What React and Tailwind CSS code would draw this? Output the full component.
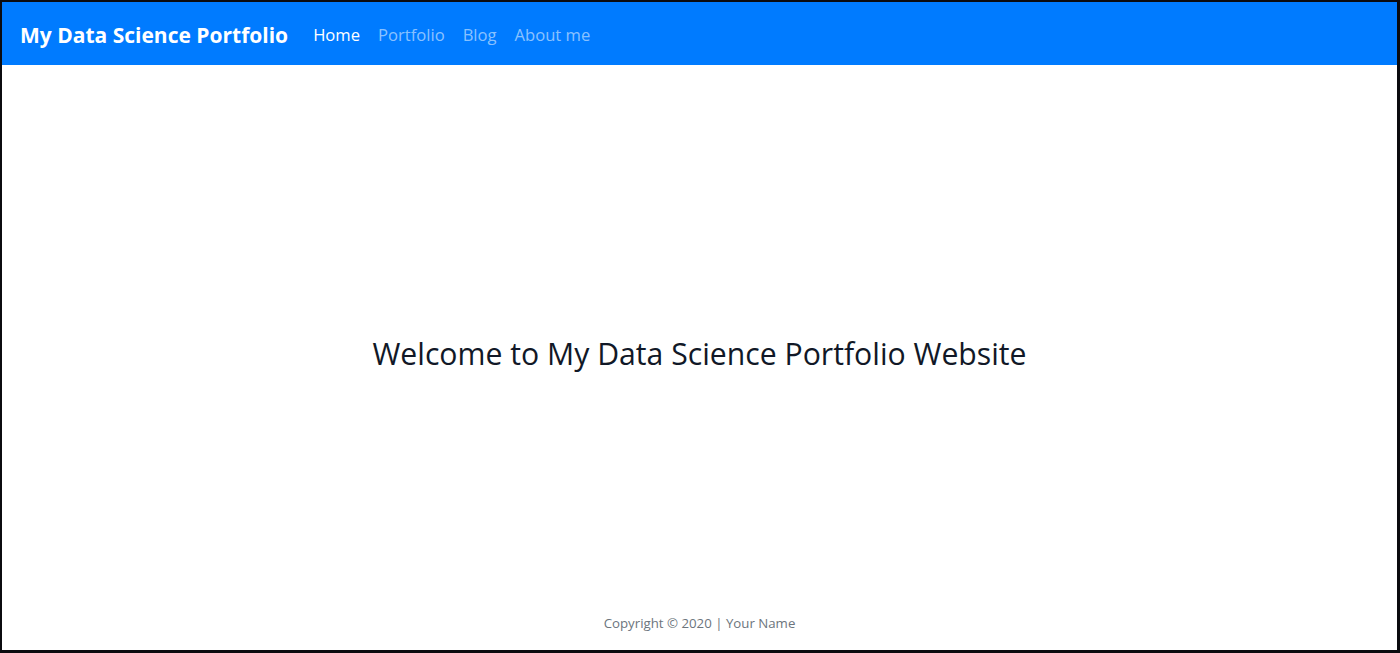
const App = () => {
  return (
    <div className="w-screen h-[653px] flex flex-col bg-white border-2 border-b-[3px] border-r-[3px] border-[#0b0b0f] font-['Open_Sans',sans-serif]">

      <nav className="h-[63px] bg-[#007bff] flex items-center px-[18px] pt-[4px]">
        <a className="text-[21px] font-bold text-white mr-[25px]">My Data Science Portfolio</a>
        <ul className="flex items-center gap-[18px] text-[16.6px]">
          <li className="text-white">Home</li>
          <li className="text-[#ffffff8c]">Portfolio</li>
          <li className="text-[#ffffff8c]">Blog</li>
          <li className="text-[#ffffff8c]">About me</li>
        </ul>
      </nav>

      <main className="flex-1 flex items-center justify-center">
        <h1 className="text-[30.2px] text-[#111827] mt-[44px]">Welcome to My Data Science Portfolio Website</h1>
      </main>

      <footer className="h-[52px] flex justify-center pt-[16px]">
        <p className="text-[13.25px] text-[#6c757d]">Copyright © 2020 | Your Name</p>
      </footer>

    </div>
  )
}

export default App
